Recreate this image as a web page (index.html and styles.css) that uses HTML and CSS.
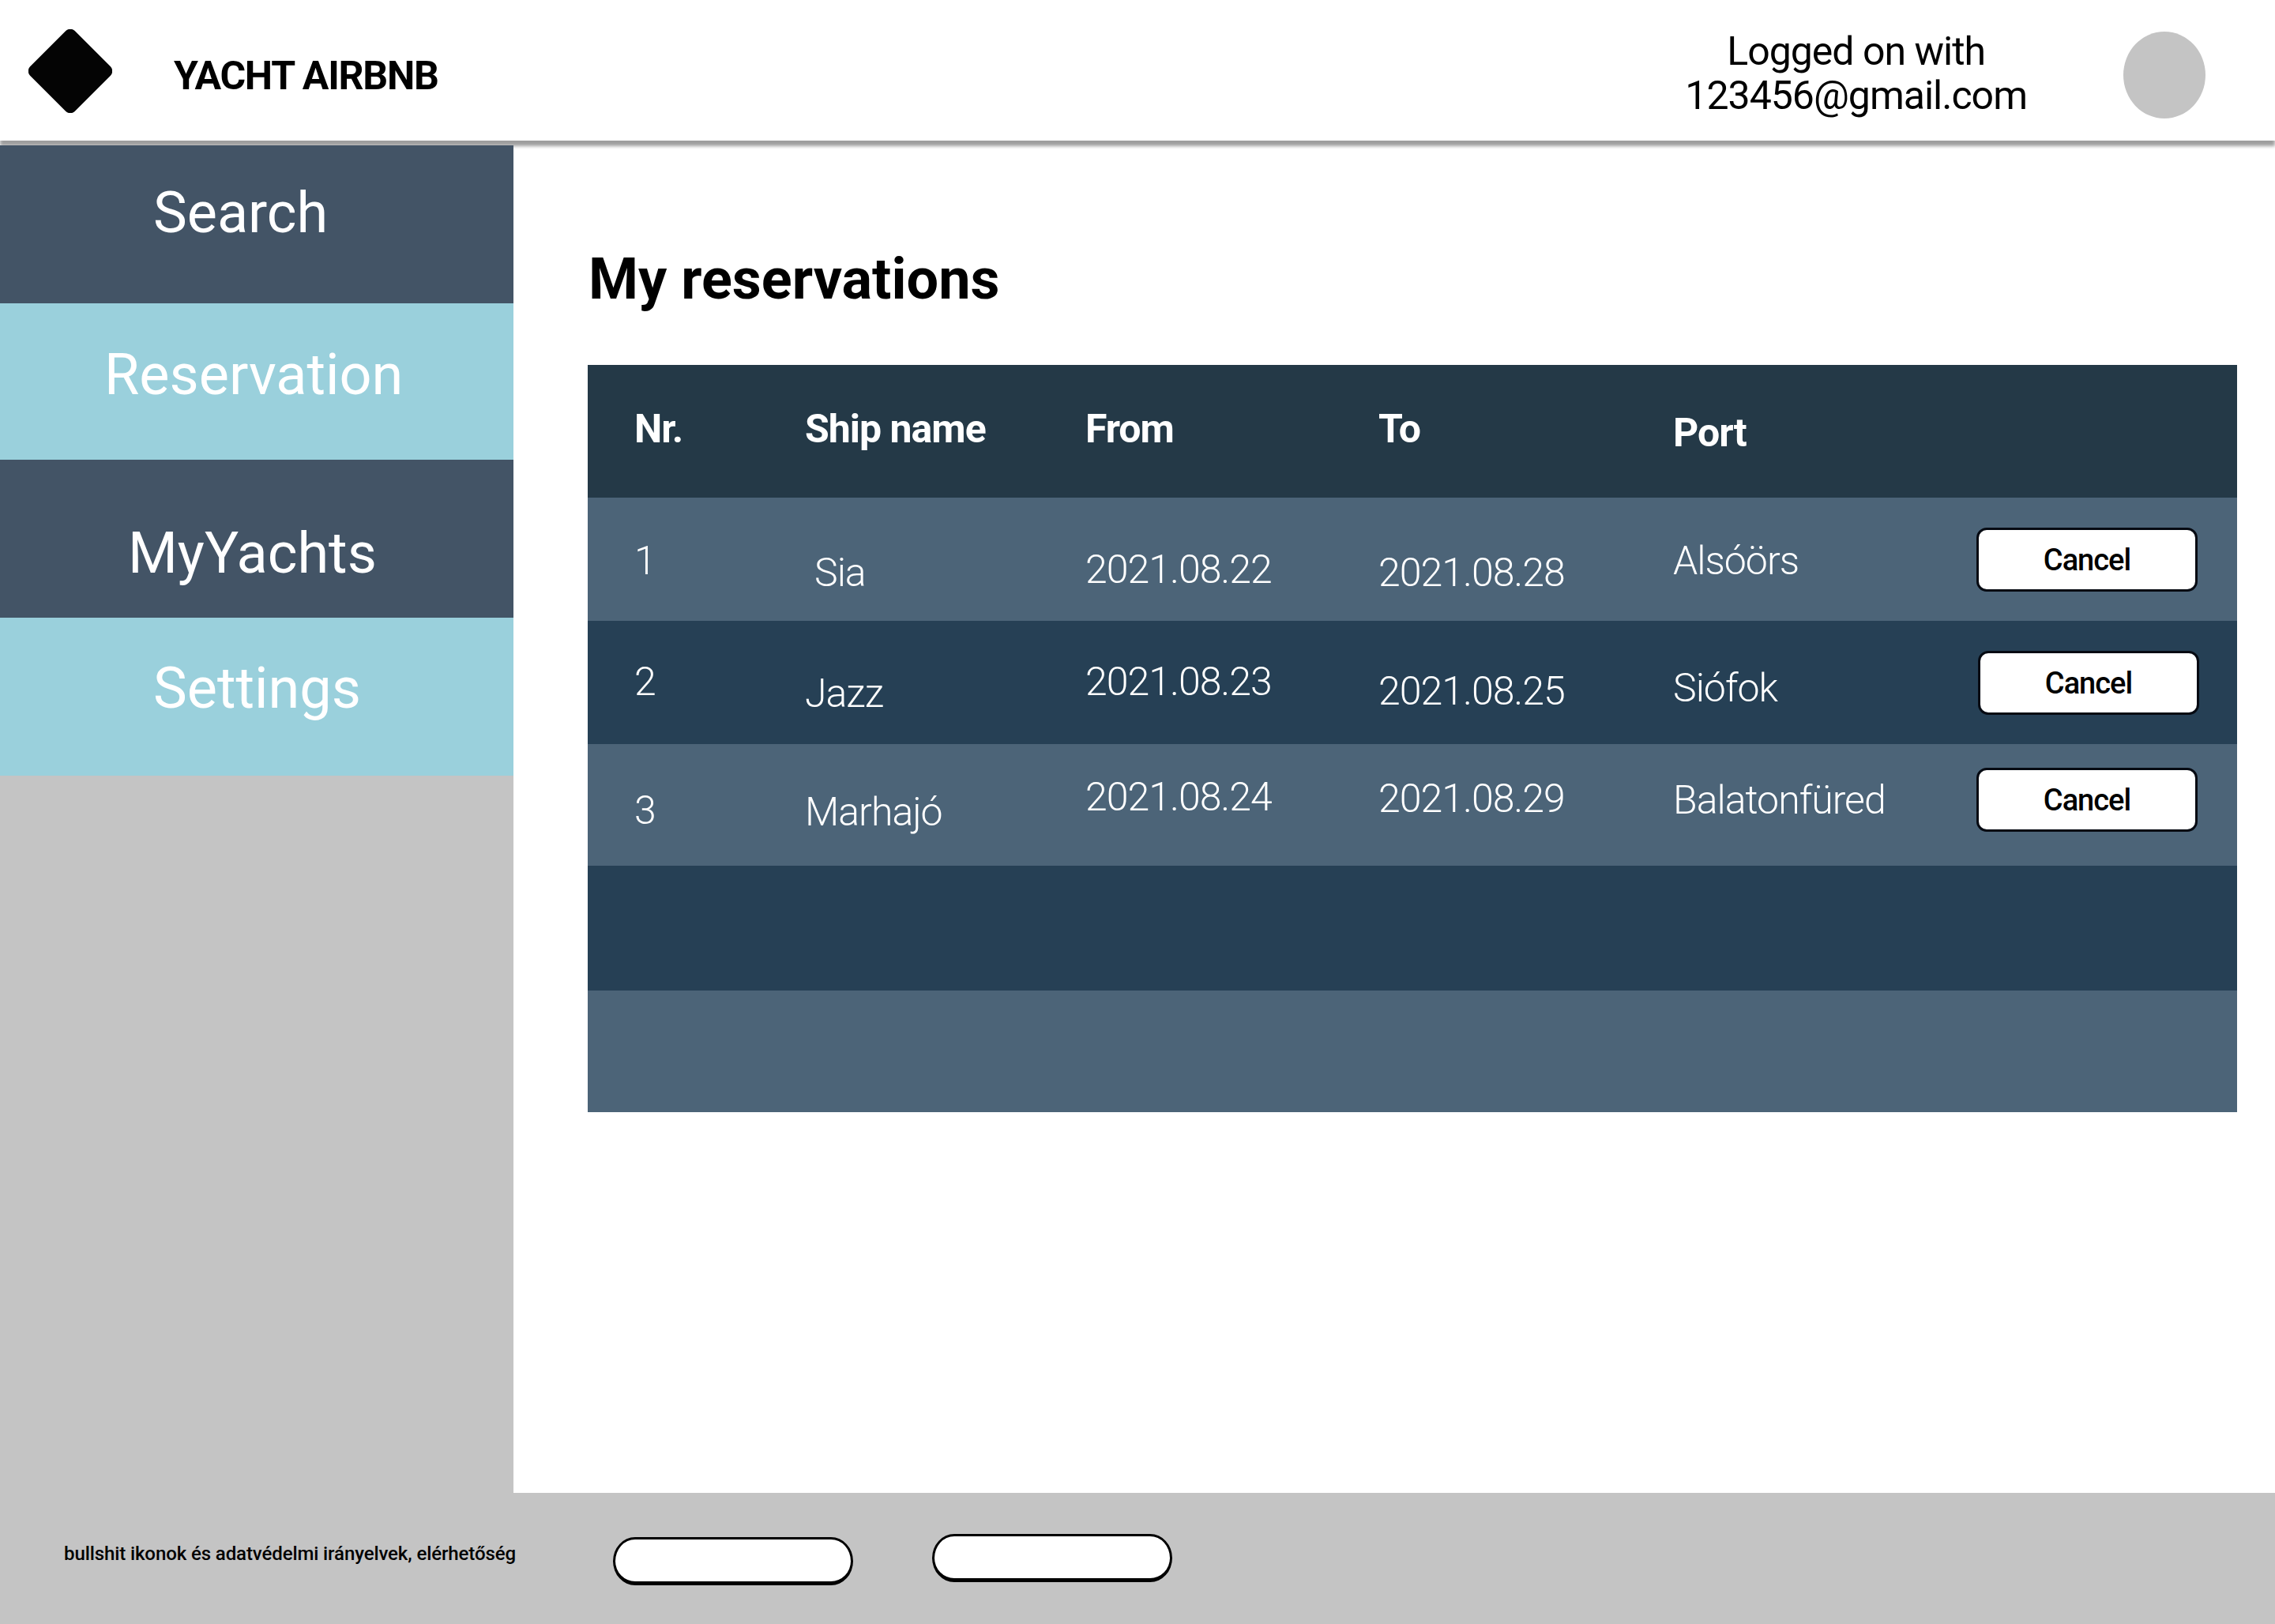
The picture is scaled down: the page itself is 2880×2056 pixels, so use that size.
FILE: index.html
```html
<!DOCTYPE html>
<html lang="en">

<head>
    <meta charset="UTF-8">
    <title>Yacht Airbnb - My reservations</title>
    <link rel="stylesheet" href="styles.css">
</head>

<body>
    <header class="topbar">
        <svg class="logo" viewBox="0 0 106 106">
            <rect x="13" y="13" width="80" height="80" rx="8" transform="rotate(45 53 53)" />
        </svg>
        <div class="brand">YACHT AIRBNB</div>
        <div class="login">Logged on with<br>123456@gmail.com</div>
        <div class="avatar"></div>
    </header>

    <div class="middle">
        <nav class="sidebar">
            <a class="nav-item nav-search" href="#">Search</a>
            <a class="nav-item nav-reservation" href="#">Reservation</a>
            <a class="nav-item nav-yachts" href="#">MyYachts</a>
            <a class="nav-item nav-settings" href="#">Settings</a>
        </nav>

        <main class="content">
            <h1>My reservations</h1>

            <div class="table">
                <div class="row head">
                    <div class="y51">Nr.</div>
                    <div class="y51">Ship name</div>
                    <div class="y51">From</div>
                    <div class="y51">To</div>
                    <div class="y56">Port</div>
                </div>
                <div class="row light">
                    <div class="y50">1</div>
                    <div class="y65 nudge">Sia</div>
                    <div class="y61">2021.08.22</div>
                    <div class="y65">2021.08.28</div>
                    <div class="y50">Alsóörs</div>
                    <button class="btn">Cancel</button>
                </div>
                <div class="row dark">
                    <div class="y47">2</div>
                    <div class="y62">Jazz</div>
                    <div class="y47">2021.08.23</div>
                    <div class="y59">2021.08.25</div>
                    <div class="y55">Siófok</div>
                    <button class="btn btn-shift">Cancel</button>
                </div>
                <div class="row light last-filled">
                    <div class="y54">3</div>
                    <div class="y56">Marhajó</div>
                    <div class="y37">2021.08.24</div>
                    <div class="y39">2021.08.29</div>
                    <div class="y41">Balatonfüred</div>
                    <button class="btn btn-high">Cancel</button>
                </div>
                <div class="row dark empty-a"></div>
                <div class="row light empty-b"></div>
            </div>
        </main>
    </div>

    <footer class="footer">
        <div class="footer-text">bullshit ikonok és adatvédelmi irányelvek, elérhetőség</div>
        <div class="pill pill-first"></div>
        <div class="pill pill-second"></div>
    </footer>
</body>

</html>
```

FILE: styles.css
```css
* {
    font-family: Roboto, "Liberation Sans", sans-serif;
    margin: 0;
    padding: 0;
    box-sizing: border-box;
}

body {
    width: 2880px;
    height: 2056px;
    background: white;
    overflow: hidden;
}

/* top bar */
.topbar {
    position: relative;
    z-index: 1;
    display: flex;
    align-items: center;
    height: 178px;
    padding-left: 36px;
    background: white;
    box-shadow: 0 7px 4px rgba(0, 0, 0, 0.38);
}

.logo {
    width: 106px;
    height: 106px;
    margin-top: 2px;
    fill: #040404;
}

.brand {
    margin: 14px auto 0 78px;
    font-size: 50px;
    line-height: 56px;
    font-weight: 700;
    letter-spacing: -1.25px;
    color: black;
}

.login {
    margin: 8px 122px 0 0;
    font-size: 50px;
    line-height: 56px;
    letter-spacing: -1px;
    text-align: center;
    color: black;
}

.avatar {
    width: 104px;
    height: 110px;
    margin: 12px 88px 0 0;
    border-radius: 50%;
    background: #c4c4c4;
}

/* sidebar + content */
.middle {
    display: flex;
    height: 1712px;
}

.sidebar {
    position: relative;
    z-index: 2;
    display: flex;
    flex-direction: column;
    width: 650px;
    margin-top: 6px;
    background: #c4c4c4;
}

.nav-item {
    display: block;
    font-size: 72px;
    line-height: 84px;
    color: white;
    text-decoration: none;
}

.nav-search {
    height: 200px;
    padding: 44px 0 0 194px;
    background: #435466;
}

.nav-reservation {
    height: 198px;
    padding: 49px 0 0 132px;
    background: #9ad0dc;
}

.nav-yachts {
    height: 200px;
    padding: 77px 0 0 162px;
    background: #435466;
}

.nav-settings {
    height: 200px;
    padding: 48px 0 0 194px;
    background: #9ad0dc;
}

.content {
    flex: 1;
    padding: 134px 48px 0 94px;
}

h1 {
    padding-left: 1px;
    font-size: 72px;
    line-height: 84px;
    font-weight: 700;
    color: black;
    margin-bottom: 66px;
}

/* reservations table */
.row {
    display: grid;
    grid-template-columns: 216px 355px 371px 373px 383px 1fr;
    align-items: start;
    height: 156px;
    padding-left: 59px;
    font-size: 50px;
    line-height: 60px;
    font-weight: 300;
    letter-spacing: -1px;
    color: white;
}

.head {
    height: 168px;
    background: #243947;
    font-weight: 700;
}

.light {
    background: #4c6478;
}

.dark {
    background: #264055;
}

.last-filled {
    height: 154px;
}

.empty-a {
    height: 158px;
}

.empty-b {
    height: 154px;
}

.nudge {
    margin-left: 12px;
}

/* text offsets inside the rows, the cells are not on a common line */
.y37 { padding-top: 37px; }
.y39 { padding-top: 39px; }
.y41 { padding-top: 41px; }
.y47 { padding-top: 47px; }
.y50 { padding-top: 50px; }
.y51 { padding-top: 51px; }
.y54 { padding-top: 54px; }
.y55 { padding-top: 55px; }
.y56 { padding-top: 56px; }
.y59 { padding-top: 59px; }
.y61 { padding-top: 61px; }
.y62 { padding-top: 62px; }
.y65 { padding-top: 65px; }

.btn {
    width: 280px;
    height: 81px;
    margin: 38px 0 0 1px;
    background: white;
    color: black;
    font-size: 38px;
    font-weight: 500;
    letter-spacing: -1px;
    border: 3px solid #060a12;
    border-radius: 13px;
}

.btn-shift {
    margin-left: 3px;
}

.btn-high {
    margin-top: 30px;
}

/* footer */
.footer {
    display: flex;
    align-items: flex-start;
    height: 166px;
    padding-left: 81px;
    background: #c4c4c4;
}

.footer-text {
    width: 571px;
    margin-top: 63px;
    font-size: 24px;
    line-height: 28px;
    font-weight: 500;
    letter-spacing: -0.1px;
    white-space: nowrap;
    color: black;
}

.pill {
    width: 304px;
    height: 61px;
    background: white;
    border: 3px solid black;
    border-bottom-width: 5px;
    border-radius: 28px / 50%;
}

.pill-first {
    margin: 56px 0 0 124px;
}

.pill-second {
    margin: 52px 0 0 100px;
}
```
